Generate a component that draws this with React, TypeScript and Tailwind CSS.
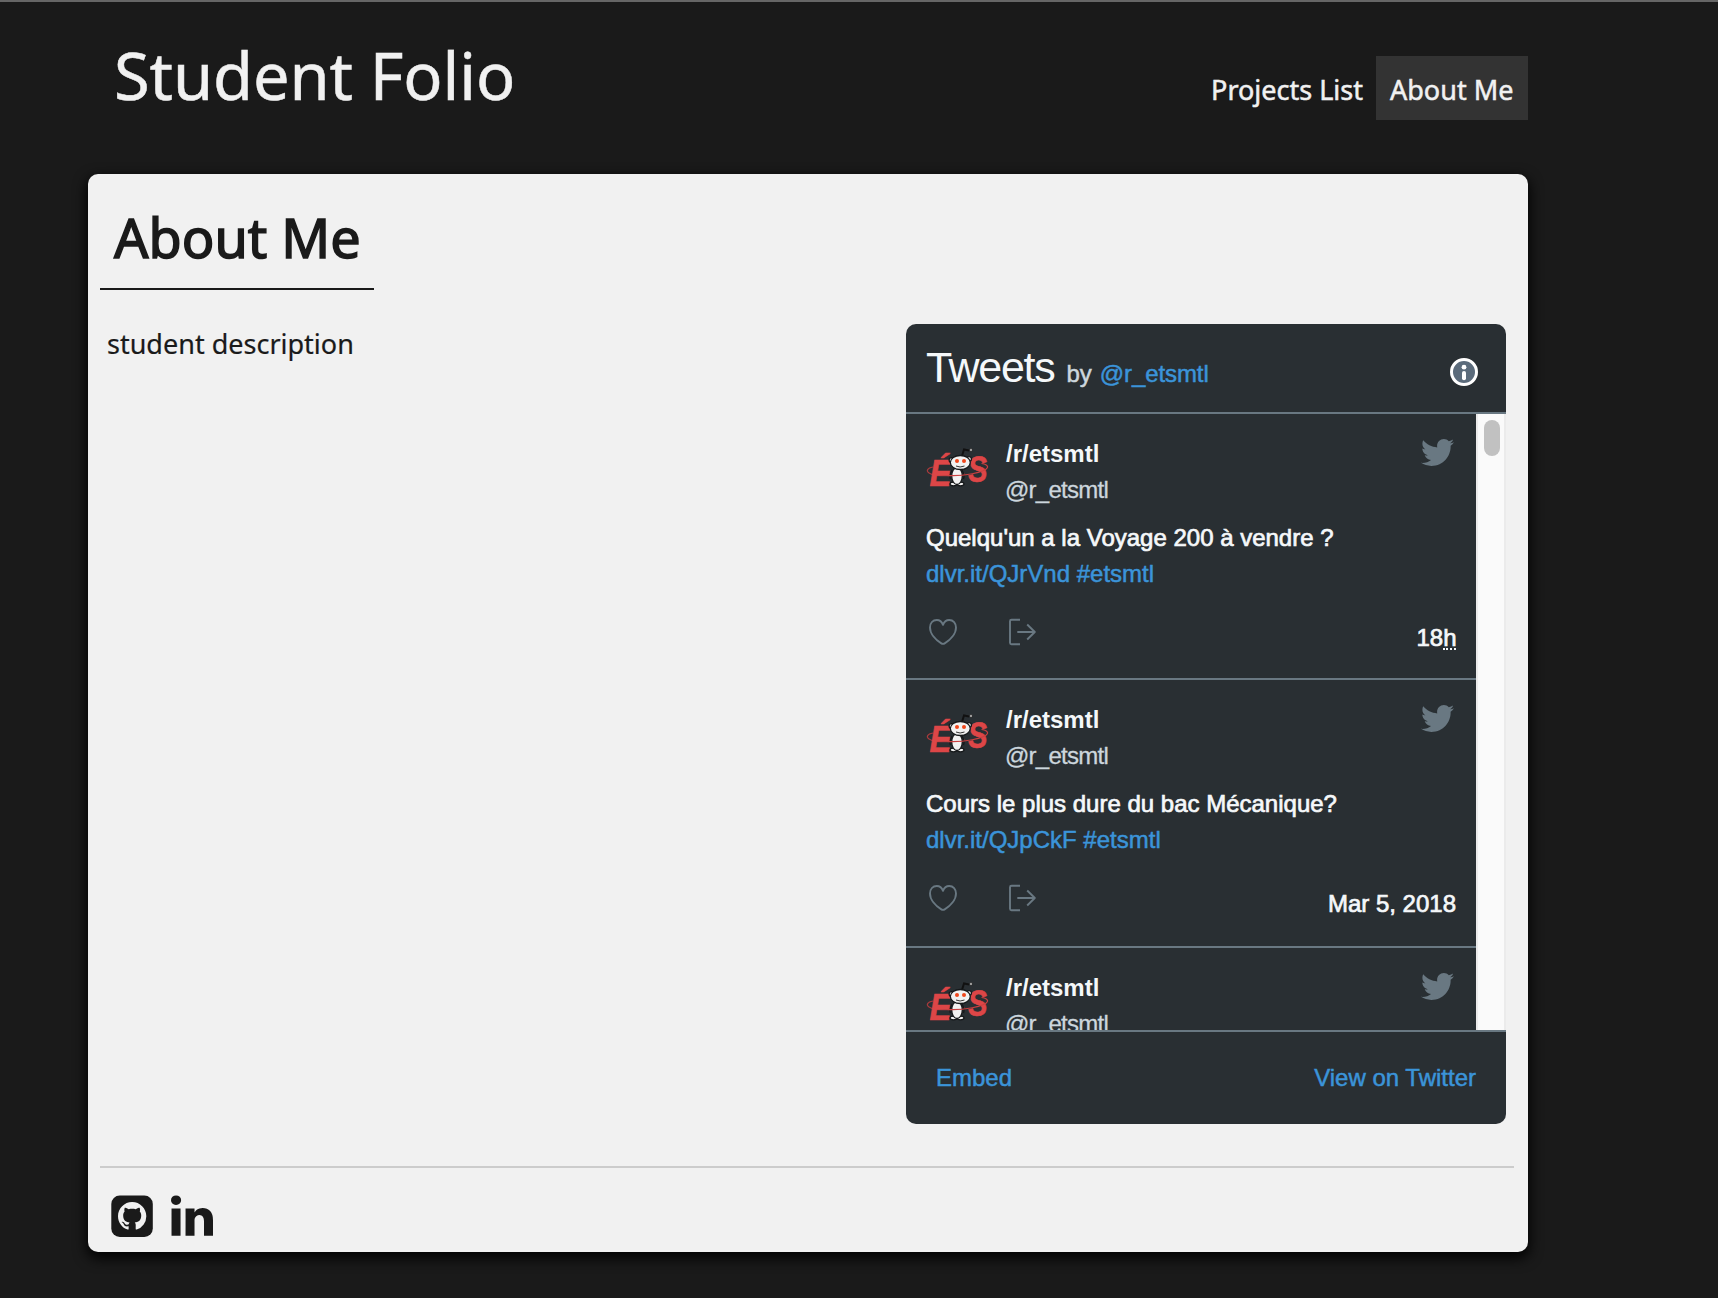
import React from "react";
import { FaTwitter } from "react-icons/fa";

function GithubIcon() {
  return (
    <svg viewBox="0 0 42 42" className="h-[42px] w-[42px]">
      <rect x="0.3" y="0.5" width="41.5" height="41.5" rx="8.500" fill="#1a1a1a" />
      <path
        transform="translate(7 7) scale(1.770)"
        fill="#f1f1f1"
        d="M8 0C3.58 0 0 3.58 0 8c0 3.54 2.29 6.53 5.47 7.59.4.07.55-.17.55-.38 0-.19-.01-.82-.01-1.49-2.01.37-2.53-.49-2.69-.94-.09-.23-.48-.94-.82-1.13-.28-.15-.68-.52-.01-.53.63-.01 1.08.58 1.23.82.72 1.21 1.87.87 2.33.66.07-.52.28-.87.51-1.07-1.78-.2-3.64-.89-3.64-3.95 0-.87.31-1.59.82-2.15-.08-.2-.36-1.02.08-2.12 0 0 .67-.21 2.2.82.64-.18 1.32-.27 2-.27s1.36.09 2 .27c1.53-1.04 2.2-.82 2.2-.82.44 1.1.16 1.92.08 2.12.51.56.82 1.27.82 2.15 0 3.07-1.87 3.75-3.65 3.95.29.25.54.73.54 1.48 0 1.07-.01 1.93-.01 2.2 0 .21.15.46.55.38A8.013 8.013 0 0016 8c0-4.42-3.58-8-8-8z"
      />
    </svg>
  );
}

function LinkedinIcon() {
  return (
    <svg viewBox="128 128 1536 1536" className="h-[42px] w-[42px] fill-[#1a1a1a]">
      <path d="M477 625v991H147V625h330zm21-306q1 73-50.5 122T312 490h-2q-82 0-132-49t-50-122q0-74 51.5-122.5T314 148t133 48.5T498 319zm1166 729v568h-329v-530q0-105-40.5-164.5T1168 862q-63 0-105.5 34.5T999 982q-11 30-11 81v553H659q2-399 2-647t-1-296l-1-48h329v144h-2q20-32 41-56t56.5-52 87-43.5T1285 602q171 0 275 113.5t104 332.5z" />
    </svg>
  );
}

function InfoIcon() {
  return (
    <svg viewBox="0 0 28 28" className="h-7 w-7">
      <circle cx="14" cy="14" r="12.5" fill="#5b6b7b" stroke="#fff" strokeWidth="3" />
      <circle cx="14" cy="9.2" r="2.4" fill="#fff" />
      <path d="M14 15v5.2" stroke="#fff" strokeWidth="4" strokeLinecap="round" />
    </svg>
  );
}

function HeartIcon() {
  return (
    <svg viewBox="0 0 28 28" className="h-7 w-7" fill="none" stroke="#697882" strokeWidth="1.9" strokeLinejoin="round">
      <path d="M14 6.800C12.600 3.300 10.300 2 7.800 2 3.800 2 1 5 1 9.600c0 6.200 5.600 12.300 11.300 15.800q1.700 1 3.400 0C21.400 21.900 27 15.800 27 9.600 27 5 24.200 2 20.200 2c-2.500 0-4.800 1.300-6.200 4.800z" />
    </svg>
  );
}

function ShareIcon() {
  return (
    <svg viewBox="0 0 28 28" className="h-7 w-7" fill="none" stroke="#697882" strokeWidth="1.9" strokeLinejoin="round">
      <path d="M12 1.700H3.500Q2 1.700 2 3.200v21.600q0 1.500 1.500 1.500H12" />
      <path d="M9.300 14h17.500M19.200 6.500l7.600 7.500-7.600 7.500" />
    </svg>
  );
}

function Avatar() {
  return (
    <svg viewBox="0 0 64 72" className="h-[72px] w-16 shrink-0 overflow-visible">
      <path d="M7 31C1 32 0 35 3 37c6 4 22 3 36 1" fill="none" stroke="#a83a3c" strokeWidth="1.100" />
      <g fill="#dd4647" fontFamily="Liberation Sans" fontWeight="700" fontStyle="italic" stroke="#dd4647" strokeWidth="0.600">
        <text x="3.500" y="49.500" fontSize="36" textLength="22" lengthAdjust="spacingAndGlyphs">É</text>
        <text fontSize="36" transform="translate(42.500 46) rotate(-3)" textLength="19.500" lengthAdjust="spacingAndGlyphs">S</text>
      </g>
      <path d="M36 20l2-6.500 5 1" fill="none" stroke="#111" strokeWidth="2" />
      <circle cx="45" cy="14" r="1.400" fill="#eee" stroke="#111" strokeWidth="0.800" />
      <g stroke="#15181a" strokeWidth="1.300" fill="#f1f1f1">
        <circle cx="25.500" cy="24" r="2.400" />
        <circle cx="43" cy="23" r="2.400" />
        <ellipse cx="27.500" cy="48" rx="3.500" ry="1.800" />
        <ellipse cx="34.500" cy="48" rx="3.500" ry="1.800" />
        <path d="M26 34q-3 7-1.500 9M36 34q3 5 1.500 9" fill="none" />
        <ellipse cx="31" cy="40" rx="5.300" ry="8.500" />
        <ellipse cx="34.300" cy="26.500" rx="10" ry="7" />
      </g>
      <circle cx="31" cy="25" r="2" fill="#f0471c" />
      <circle cx="38" cy="25" r="2" fill="#f0471c" />
      <path d="M30 30q4 2 8.500 0" fill="none" stroke="#333" strokeWidth="1" />
      <path d="M21 39.500c16 1 38-3 40.500-8 .8-2-2-3.500-6-4" fill="none" stroke="#c84041" strokeWidth="1.200" />
    </svg>
  );
}

type TweetProps = {
  text: string;
  link: string;
  time: React.ReactNode;
  border: string;
};

function Tweet({ text, link, time, border }: TweetProps) {
  return (
    <article className={"box-content h-[264px] shrink-0 border-[#697882] " + border}>
      <div className="flex flex-col px-5 pt-[22px]">
        <div className="flex h-[72px] gap-4">
          <Avatar />
          <div className="flex-1 leading-9">
            <div className="font-bold text-[#f5f8fa]">/r/etsmtl</div>
            <div className="-ml-px tracking-[-0.75px] text-[#ccd6dd] [-webkit-text-stroke:0.3px_#ccd6dd]">@r_etsmtl</div>
          </div>
          <FaTwitter className="mr-[2px] h-[33px] w-[33px] text-[#697882]" />
        </div>
        <p className="mt-3 leading-9 text-[#f5f8fa] [-webkit-text-stroke:0.7px_#f5f8fa]">{text}</p>
        <p className="leading-9 text-[#3b94d9] [-webkit-text-stroke:0.5px_#3b94d9]">{link}</p>
        <div className="mt-[26px] flex">
          <div className="flex gap-[51px] pl-[3px]">
            <HeartIcon />
            <ShareIcon />
          </div>
          <div className="mt-[2px] ml-auto leading-9 text-[#f5f8fa] [-webkit-text-stroke:0.7px_#f5f8fa]">{time}</div>
        </div>
      </div>
    </article>
  );
}

function Timeline() {
  return (
    <section className="flex h-[800px] w-[600px] flex-col overflow-hidden rounded-[10px] bg-[#292f33] font-['Liberation_Sans',Arial,sans-serif] text-[24px]">
      <header className="flex h-[90px] items-start border-b-2 border-[#697882] pr-7 pl-5">
        <h2 className="mt-[18px] flex items-baseline leading-[50px] text-[#ccd6dd]">
          <span className="text-[43px] tracking-[-1.3px] text-[#f5f8fa]">Tweets</span>
          <span className="ml-[12px] [-webkit-text-stroke:0.5px_#ccd6dd]">by</span>
          <span className="ml-[8px] tracking-[-0.1px] text-[#3b94d9] [-webkit-text-stroke:0.5px_#3b94d9]">@r_etsmtl</span>
        </h2>
        <div className="mt-[34px] ml-auto">
          <InfoIcon />
        </div>
      </header>
      <div className="flex h-[616px] overflow-hidden">
        <div className="flex w-[570px] flex-col">
          <Tweet
            border="border-b-2"
            text="Quelqu'un a la Voyage 200 à vendre ?"
            link="dlvr.it/QJrVnd #etsmtl"
            time={
              <>
                18<span className="inline-block h-[30px] border-b-2 border-dotted border-[#f5f8fa] align-top tracking-[-0.5px]">h</span>
              </>
            }
          />
          <Tweet
            border="border-b-2 pb-[2px]"
            text="Cours le plus dure du bac Mécanique?"
            link="dlvr.it/QJpCkF #etsmtl"
            time="Mar 5, 2018"
          />
          <Tweet border="border-b-2" text="" link="" time="" />
        </div>
        <div className="flex w-[30px] justify-center border-r-2 border-l-2 border-[#ebebeb] bg-[#fafafa] pt-[6px] pl-[2px]">
          <div className="h-9 w-4 rounded-full bg-[#c1c1c1]" />
        </div>
      </div>
      <footer className="flex flex-1 justify-between border-t-2 border-[#697882] px-[30px] pt-7 leading-9 text-[#3b94d9] [-webkit-text-stroke:0.5px_#3b94d9]">
        <span>Embed</span>
        <span>View on Twitter</span>
      </footer>
    </section>
  );
}

export default function App() {
  return (
    <div className="h-[1298px] w-[1718px] overflow-hidden border-t-2 border-[#666] bg-[#1a1a1a] font-['Noto_Sans',sans-serif] text-[27px]">
      <div className="ml-[88px] w-[1440px]">
        <header className="flex h-[172px] items-start justify-between pl-[26px]">
          <h1 className="mt-[28px] text-[65px] leading-[90px] tracking-[-0.1px] text-[#f1f1f1] [-webkit-text-stroke:0.5px_#f1f1f1]">
            Student Folio
          </h1>
          <nav className="mt-[54px] flex h-16 leading-[68px] text-[#f1f1f1] [-webkit-text-stroke:0.5px_#f1f1f1]">
            <a className="px-[13px]">Projects List</a>
            <a className="w-[152px] bg-[#333] pl-[14px]">About Me</a>
          </nav>
        </header>
        <main className="flex h-[1078px] flex-col rounded-[10px] bg-[#f1f1f1] pr-[14px] pl-3 text-[#1a1a1a] shadow-[0_5px_14px_1px_#000]">
          <h2 className="h-[116px] w-[274px] border-b-2 border-[#1a1a1a] pt-[23px] pl-[14px] text-[54px] leading-[80px] whitespace-nowrap [-webkit-text-stroke:1.5px_#1a1a1a]">
            About Me
          </h2>
          <div className="flex justify-between pt-[34px] pr-2 pl-[7px]">
            <p className="leading-[40px] [-webkit-text-stroke:0.2px_#1a1a1a]">student description</p>
            <Timeline />
          </div>
          <footer className="mt-[42px] flex gap-[18px] border-t-2 border-[#ccc] pt-[27px] pl-[11px]">
            <GithubIcon />
            <LinkedinIcon />
          </footer>
        </main>
      </div>
    </div>
  );
}
